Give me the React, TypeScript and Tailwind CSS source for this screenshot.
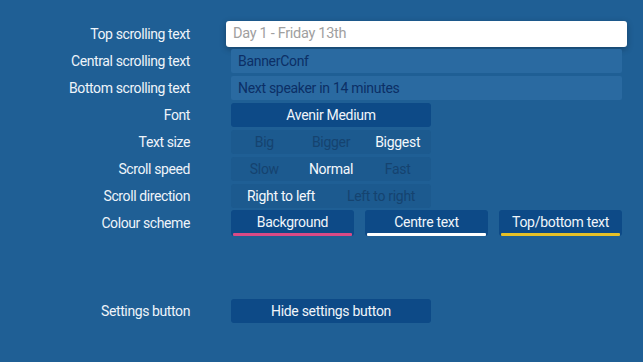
const font = { fontFamily: "Roboto, 'Noto Sans', sans-serif" }

function Row({ label, children }: { label: string; children: React.ReactNode }) {
  return (
    <div className="flex h-[24px] items-center">
      <div className="w-[190px] shrink-0 text-right text-[14px] tracking-[-0.4px] text-[#eef4fa]">{label}</div>
      <div className="ml-[41px] flex h-full w-[391px] items-center">{children}</div>
    </div>
  )
}

function Segmented({ items, active }: { items: string[]; active: number }) {
  return (
    <div className="flex h-full w-[200px] items-center rounded-[3px] bg-[#1c5a8f]">
      {items.map((t, i) => (
        <div
          key={t}
          className={
            "flex-1 text-center text-[14px] tracking-[-0.3px] " +
            (i === active ? "text-[#f4f8fc]" : "text-[#15436f]")
          }
        >
          {t}
        </div>
      ))}
    </div>
  )
}

export default function App() {
  return (
    <div className="h-[362px] w-[643px] overflow-hidden bg-[#1f5f95] pt-[22px]" style={font}>
      <div className="flex flex-col gap-[3px]">
        <Row label="Top scrolling text">
          <div className="-mx-[5px] flex h-[26px] w-[401px] items-center rounded-[3px] bg-white px-[7px] text-[14.5px] tracking-[-0.3px] text-[#a0a0a0] shadow-[0_2px_6px_rgba(0,0,0,0.3)]">
            Day 1 - Friday 13th
          </div>
        </Row>
        <Row label="Central scrolling text">
          <div className="flex h-full w-full items-center rounded-[2px] bg-[#2a6aa1] px-[7px] text-[14px] tracking-[-0.3px] text-[#0c2f66]">
            BannerConf
          </div>
        </Row>
        <Row label="Bottom scrolling text">
          <div className="flex h-full w-full items-center rounded-[2px] bg-[#2a6aa1] px-[7px] text-[14px] tracking-[-0.3px] text-[#0c2f66]">
            Next speaker in 14 minutes
          </div>
        </Row>
        <Row label="Font">
          <div className="flex h-full w-[200px] items-center justify-center rounded-[3px] bg-[#0d4a87] text-[14px] tracking-[-0.3px] text-[#f0f5fa]">
            Avenir Medium
          </div>
        </Row>
        <Row label="Text size">
          <Segmented items={["Big", "Bigger", "Biggest"]} active={2} />
        </Row>
        <Row label="Scroll speed">
          <Segmented items={["Slow", "Normal", "Fast"]} active={1} />
        </Row>
        <Row label="Scroll direction">
          <Segmented items={["Right to left", "Left to right"]} active={0} />
        </Row>
        <Row label="Colour scheme">
          <div className="flex h-[26px] w-full gap-[11px]">
            {[
              { t: "Background", c: "bg-[#d94a86]" },
              { t: "Centre text", c: "bg-white" },
              { t: "Top/bottom text", c: "bg-[#e6c027]" },
            ].map((b) => (
              <div
                key={b.t}
                className="relative flex flex-1 items-center justify-center rounded-[3px] bg-[#0d4a87] pb-[2px] text-[14px] tracking-[-0.3px] text-[#f0f5fa]"
              >
                {b.t}
                <div className={"absolute bottom-0 left-[2px] right-[2px] h-[3px] rounded-[1px] " + b.c} />
              </div>
            ))}
          </div>
        </Row>
      </div>
      <div className="mt-[64px]">
        <Row label="Settings button">
          <div className="flex h-full w-[200px] items-center justify-center rounded-[3px] bg-[#0d4a87] text-[14px] tracking-[-0.3px] text-[#f0f5fa]">
            Hide settings button
          </div>
        </Row>
      </div>
    </div>
  )
}
